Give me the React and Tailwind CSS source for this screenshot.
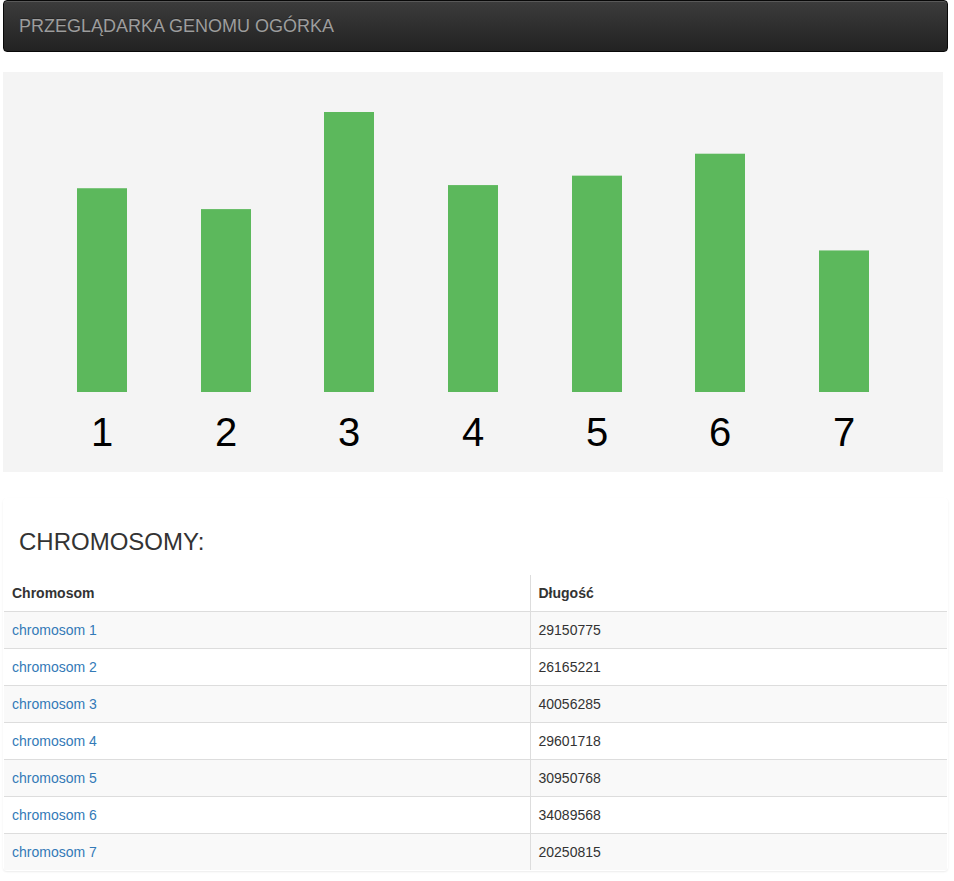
import React from "react";

const data = [
  { name: "chromosom 1", len: 29150775 },
  { name: "chromosom 2", len: 26165221 },
  { name: "chromosom 3", len: 40056285 },
  { name: "chromosom 4", len: 29601718 },
  { name: "chromosom 5", len: 30950768 },
  { name: "chromosom 6", len: 34089568 },
  { name: "chromosom 7", len: 20250815 },
];

const max = Math.max(...data.map((d) => d.len));

function Chart() {
  return (
    <svg width="940" height="400" className="block bg-[#f4f4f4]">
      {data.map((d, i) => {
        const h = (d.len / max) * 280;
        const x = Math.round(74 + i * 123.67);
        return (
          <g key={i}>
            <rect x={x} y={320 - h} width="50" height={h} fill="#5cb85c" />
            <text
              x={x + 25}
              y="374"
              textAnchor="middle"
              fontSize="40"
              fontFamily="'Liberation Sans', Arial, sans-serif"
              fill="#000"
            >
              {i + 1}
            </text>
          </g>
        );
      })}
    </svg>
  );
}

export default function App() {
  return (
    <div className="font-['Liberation_Sans',Arial,sans-serif] text-[14px] leading-[20px] text-[#333] bg-white min-h-[881px] pl-[3px] w-[948px]">
      <div className="h-[52px] rounded-[4px] border border-[#080808] bg-[linear-gradient(to_bottom,#3c3c3c_0%,#222_100%)] shadow-[inset_0_1px_0_rgba(255,255,255,0.15)] flex items-center px-[15px]">
        <span className="text-[18px] leading-[20px] text-[#9d9d9d] [text-shadow:0_-1px_0_rgba(0,0,0,0.25)]">
          PRZEGLĄDARKA GENOMU OGÓRKA
        </span>
      </div>

      <div className="mt-[20px]">
        <Chart />
      </div>

      <div className="mt-[26px] rounded-[4px] border border-transparent shadow-[0_1px_2px_rgba(0,0,0,0.08)] bg-white">
        <div className="px-[15px] py-[10px]">
          <h3 className="mt-[20px] mb-[10px] text-[24px] leading-[1.1] font-normal">
            CHROMOSOMY:
          </h3>
        </div>
        <table className="w-full border-collapse">
          <thead>
            <tr className="border-b border-[#ddd]">
              <th className="w-[526px] text-left font-bold px-[8px] py-[8px] h-[36px] border-r border-[#ddd]">
                Chromosom
              </th>
              <th className="text-left font-bold px-[8px] py-[8px] h-[36px]">Długość</th>
            </tr>
          </thead>
          <tbody>
            {data.map((d, i) => (
              <tr
                key={i}
                className={
                  (i % 2 === 0 ? "bg-[#f9f9f9] " : "bg-white ") +
                  (i < data.length - 1 ? "border-b border-[#ddd]" : "")
                }
              >
                <td className="px-[8px] py-[8px] h-[36px] border-r border-[#ddd]">
                  <a href="#" className="text-[#337ab7]">
                    {d.name}
                  </a>
                </td>
                <td className="px-[8px] py-[8px] h-[36px]">{d.len}</td>
              </tr>
            ))}
          </tbody>
        </table>
      </div>
    </div>
  );
}
